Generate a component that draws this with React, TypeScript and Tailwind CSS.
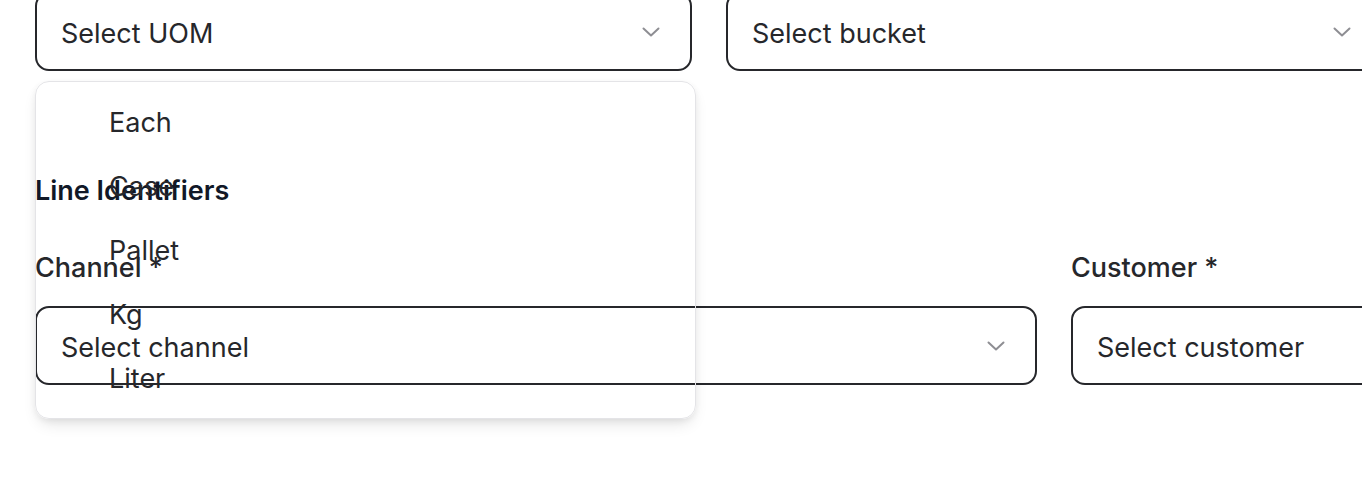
const UOMS = ['Each', 'Case', 'Pallet', 'Kg', 'Liter']

function Chevron() {
  return (
    <svg width="18" height="10" viewBox="0 0 18 10" fill="none" className="shrink-0">
      <polyline
        points="1.5,1.5 9,8.5 16.5,1.5"
        stroke="#8e8e93"
        strokeWidth="2"
        strokeLinecap="round"
        strokeLinejoin="round"
      />
    </svg>
  )
}

function SelectBox({ placeholder, width, chevron = true }: { placeholder: string; width: string; chevron?: boolean }) {
  return (
    <div
      className={`flex h-[79px] shrink-0 items-center justify-between rounded-[14px] border-2 border-[#26272b] pl-[24px] pr-[30px] ${width}`}
    >
      <span className="pt-[3px] text-[27px] leading-none text-[#26272b]">{placeholder}</span>
      {chevron && <Chevron />}
    </div>
  )
}

export default function App() {
  return (
    <div
      className="relative h-[486px] w-[1362px] overflow-hidden bg-white pl-[35px]"
      style={{ fontFamily: 'Inter, "Noto Sans", sans-serif' }}
    >
      <div className="-mt-[8px] flex gap-[34px]">
        <SelectBox placeholder="Select UOM" width="w-[657px]" />
        <SelectBox placeholder="Select bucket" width="w-[657px]" />
      </div>

      <h3 className="mt-[102px] text-[27px] font-semibold leading-[36px] text-[#111827]">Line Identifiers</h3>

      <div className="mt-[41px] flex gap-[34px]">
        <div className="flex w-[1002px] shrink-0 flex-col gap-[20px]">
          <label className="text-[27px] font-medium leading-[36px] text-[#26272b]">Channel *</label>
          <SelectBox placeholder="Select channel" width="w-[1002px]" />
        </div>
        <div className="flex w-[1002px] shrink-0 flex-col gap-[20px]">
          <label className="text-[27px] font-medium leading-[36px] text-[#26272b]">Customer *</label>
          <SelectBox placeholder="Select customer" width="w-[1002px]" />
        </div>
      </div>

      {/* open UOM listbox */}
      <ul className="absolute left-[35px] top-[81px] w-[661px] rounded-[14px] border border-[#e4e4e7] py-[8px] shadow-[0_8px_16px_-4px_rgba(0,0,0,0.12),0_2px_6px_rgba(0,0,0,0.06)]">
        {UOMS.map((u) => (
          <li key={u} className="flex h-[64px] items-center pl-[73px] pt-[2px] text-[27px] text-[#26272b]">
            {u}
          </li>
        ))}
      </ul>
    </div>
  )
}
